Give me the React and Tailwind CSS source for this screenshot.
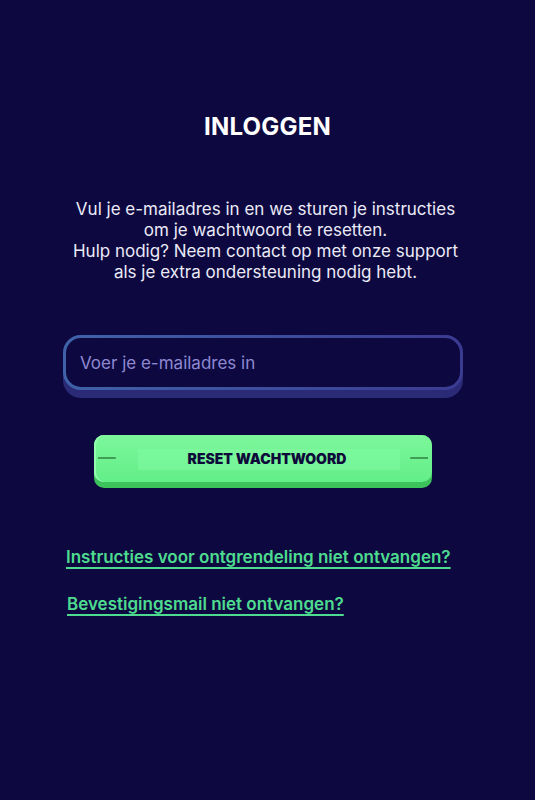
import React from 'react'

function App() {
  return (
    <div className="min-h-[800px] w-full bg-[#0d0940] font-['Inter',sans-serif] text-white">
      <div className="flex flex-col items-center pt-[112px]">
        <h1 className="text-[24px] font-bold leading-[30px] tracking-[0.2px]">INLOGGEN</h1>

        <p className="mt-[57px] pr-[4px] text-center text-[17px] leading-[21px] text-[#ebeaf7]">
          Vul je e-mailadres in en we sturen je instructies
          <br />
          om je wachtwoord te resetten.
          <br />
          Hulp nodig? Neem contact op met onze support
          <br />
          als je extra ondersteuning nodig hebt.
        </p>
      </div>

      <div className="mt-[52px] ml-[63px] w-[400px]">
        <div className="rounded-[18px] bg-[#2a2a76] pb-[8px]">
          <div className="rounded-[18px] bg-gradient-to-r from-[#3f62a8] to-[#3a3a92] p-[3px]">
            <input
              type="email"
              placeholder="Voer je e-mailadres in"
              className="h-[49px] w-full rounded-[15px] bg-[#0d0940] px-[14px] text-[17px] text-white placeholder:text-[#8d88d2] focus:outline-none"
            />
          </div>
        </div>
      </div>

      <div className="mt-[37px] ml-[94px]">
        <button className="relative w-[338px] rounded-[10px] bg-[#3cc35c] pb-[6px]">
          <div className="relative flex h-[47px] items-center justify-center rounded-[10px] bg-gradient-to-b from-[#7cf79b] to-[#62ee88] pl-[8px] shadow-[inset_2px_0_0_#95fbb0]">
            <div className="absolute left-[44px] right-[32px] top-[14px] h-[21px] bg-[#7ffaa0] opacity-60"></div>
            <div className="absolute left-[4px] top-[22px] h-[2px] w-[18px] rounded-r-full bg-[#3f9d55]"></div>
            <div className="absolute right-[4px] top-[22px] h-[2px] w-[18px] rounded-l-full bg-[#3f9d55]"></div>
            <span className="relative text-[14px] font-black tracking-[0px] text-[#0e0b3a]">
              RESET WACHTWOORD
            </span>
          </div>
        </button>
      </div>

      <div className="mt-[57px] flex flex-col items-start gap-[23px] pl-[66px]">
        <a href="#" className="text-[17px] font-semibold leading-[24px] text-[#4ddc8f] underline decoration-[2px] underline-offset-[4px]">
          Instructies voor ontgrendeling niet ontvangen?
        </a>
        <a href="#" className="ml-[1px] text-[17px] font-semibold leading-[24px] text-[#4ddc8f] underline decoration-[2px] underline-offset-[4px]">
          Bevestigingsmail niet ontvangen?
        </a>
      </div>
    </div>
  )
}

export default App
